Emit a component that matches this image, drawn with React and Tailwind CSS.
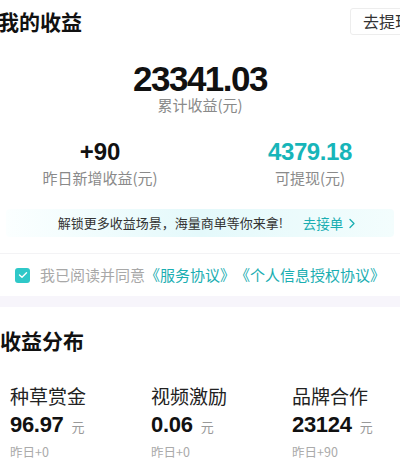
export default function App() {
  const font = { fontFamily: '"Liberation Sans", "Noto Sans CJK SC", sans-serif' };
  const cjk = '[font-family:"Noto_Sans_CJK_SC","Liberation_Sans",sans-serif]';
  const cols = [
    { t: "种草赏金", v: "96.97", y: "昨日+0" },
    { t: "视频激励", v: "0.06", y: "昨日+0" },
    { t: "品牌合作", v: "23124", y: "昨日+90" },
  ];
  return (
    <div className="w-[400px] h-[470px] overflow-hidden bg-white" style={font}>
      <div className="flex items-center h-[42px]">
        <div className={`-ml-[2px] text-[21px] leading-[28px] font-bold text-[#111] ${cjk}`}>我的收益</div>
        <div className={`ml-auto -mr-[24px] shrink-0 h-[27px] px-[12px] flex items-center border border-[#ededed] rounded-[3px] text-[16px] text-[#333] whitespace-nowrap ${cjk}`}>
          去提现
        </div>
      </div>

      <div className="mt-[22px] text-center text-[35px] leading-[30px] font-bold tracking-[-1.5px] text-[#111]">
        23341.03
      </div>
      <div className={`mt-[2px] text-center text-[15px] leading-[18px] text-[#8a8a8a] ${cjk}`}>累计收益(元)</div>

      <div className="mt-[24px] -ml-[5px] w-[420px] grid grid-cols-2">
        <div className="flex flex-col items-center">
          <div className="text-[24px] leading-[28px] font-bold text-[#111]">+90</div>
          <div className={`mt-[2px] text-[15px] leading-[20px] text-[#8a8a8a] ${cjk}`}>昨日新增收益(元)</div>
        </div>
        <div className="flex flex-col items-center">
          <div className="text-[24px] leading-[28px] font-bold tracking-[-0.4px] text-[#17b5b9]">4379.18</div>
          <div className={`mt-[2px] text-[15px] leading-[20px] text-[#8a8a8a] ${cjk}`}>可提现(元)</div>
        </div>
      </div>

      <div className="mt-[21px] mx-[6px] h-[28px] pl-[14px] flex items-center justify-center rounded-[4px] bg-gradient-to-r from-[#fbffff] via-[#e4f9fb] to-[#f3fdfd]">
        <span className={`text-[13px] text-[#333] whitespace-nowrap ${cjk}`}>解锁更多收益场景，海量商单等你来拿!</span>
        <span className={`ml-[20px] text-[13.5px] text-[#1aaeb2] whitespace-nowrap ${cjk}`}>去接单</span>
        <svg className="ml-[5px]" width="8" height="11" viewBox="0 0 8 11" fill="none">
          <path d="M2 1.5 L6 5.5 L2 9.5" stroke="#1aaeb2" strokeWidth="1.3" strokeLinecap="round" strokeLinejoin="round" />
        </svg>
      </div>

      <div className="mt-[16px] h-[1px] bg-[#f3f3f5]" />
      <div className="h-[42px] flex items-center pl-[15px] [text-spacing-trim:space-all]">
        <div className="w-[15px] h-[15px] shrink-0 rounded-[3px] bg-[#2fc8c8] flex items-center justify-center">
          <svg width="10" height="8" viewBox="0 0 10 8" fill="none">
            <path d="M1.5 4 L4 6.2 L8.5 1.8" stroke="white" strokeWidth="1.4" strokeLinecap="round" strokeLinejoin="round" />
          </svg>
        </div>
        <span className={`ml-[10px] text-[15px] text-[#a8a8a8] whitespace-nowrap ${cjk}`}>我已阅读并同意</span>
        <span className={`text-[15px] text-[#1aaeb2] whitespace-nowrap ${cjk}`}>《服务协议》《个人信息授权协议》</span>
      </div>
      <div className="h-[11px] bg-[#f7f5fb]" />

      <div className={`mt-[19px] text-[21px] leading-[28px] font-bold text-[#111] ${cjk}`}>收益分布</div>

      <div className="mt-[30px] flex pl-[10px]">
        {cols.map((c) => (
          <div key={c.t} className="w-[141px] shrink-0 flex flex-col">
            <div className={`text-[19px] leading-[24px] text-[#222] ${cjk}`}>{c.t}</div>
            <div className="mt-[4px] flex items-baseline">
              <span className="text-[22px] leading-[26px] font-bold tracking-[-0.3px] text-[#111]">{c.v}</span>
              <span className={`ml-[8px] text-[13px] text-[#999] ${cjk}`}>元</span>
            </div>
            <div className={`mt-[5px] text-[12.5px] leading-[18px] text-[#aaa] ${cjk}`}>{c.y}</div>
          </div>
        ))}
      </div>
    </div>
  );
}
